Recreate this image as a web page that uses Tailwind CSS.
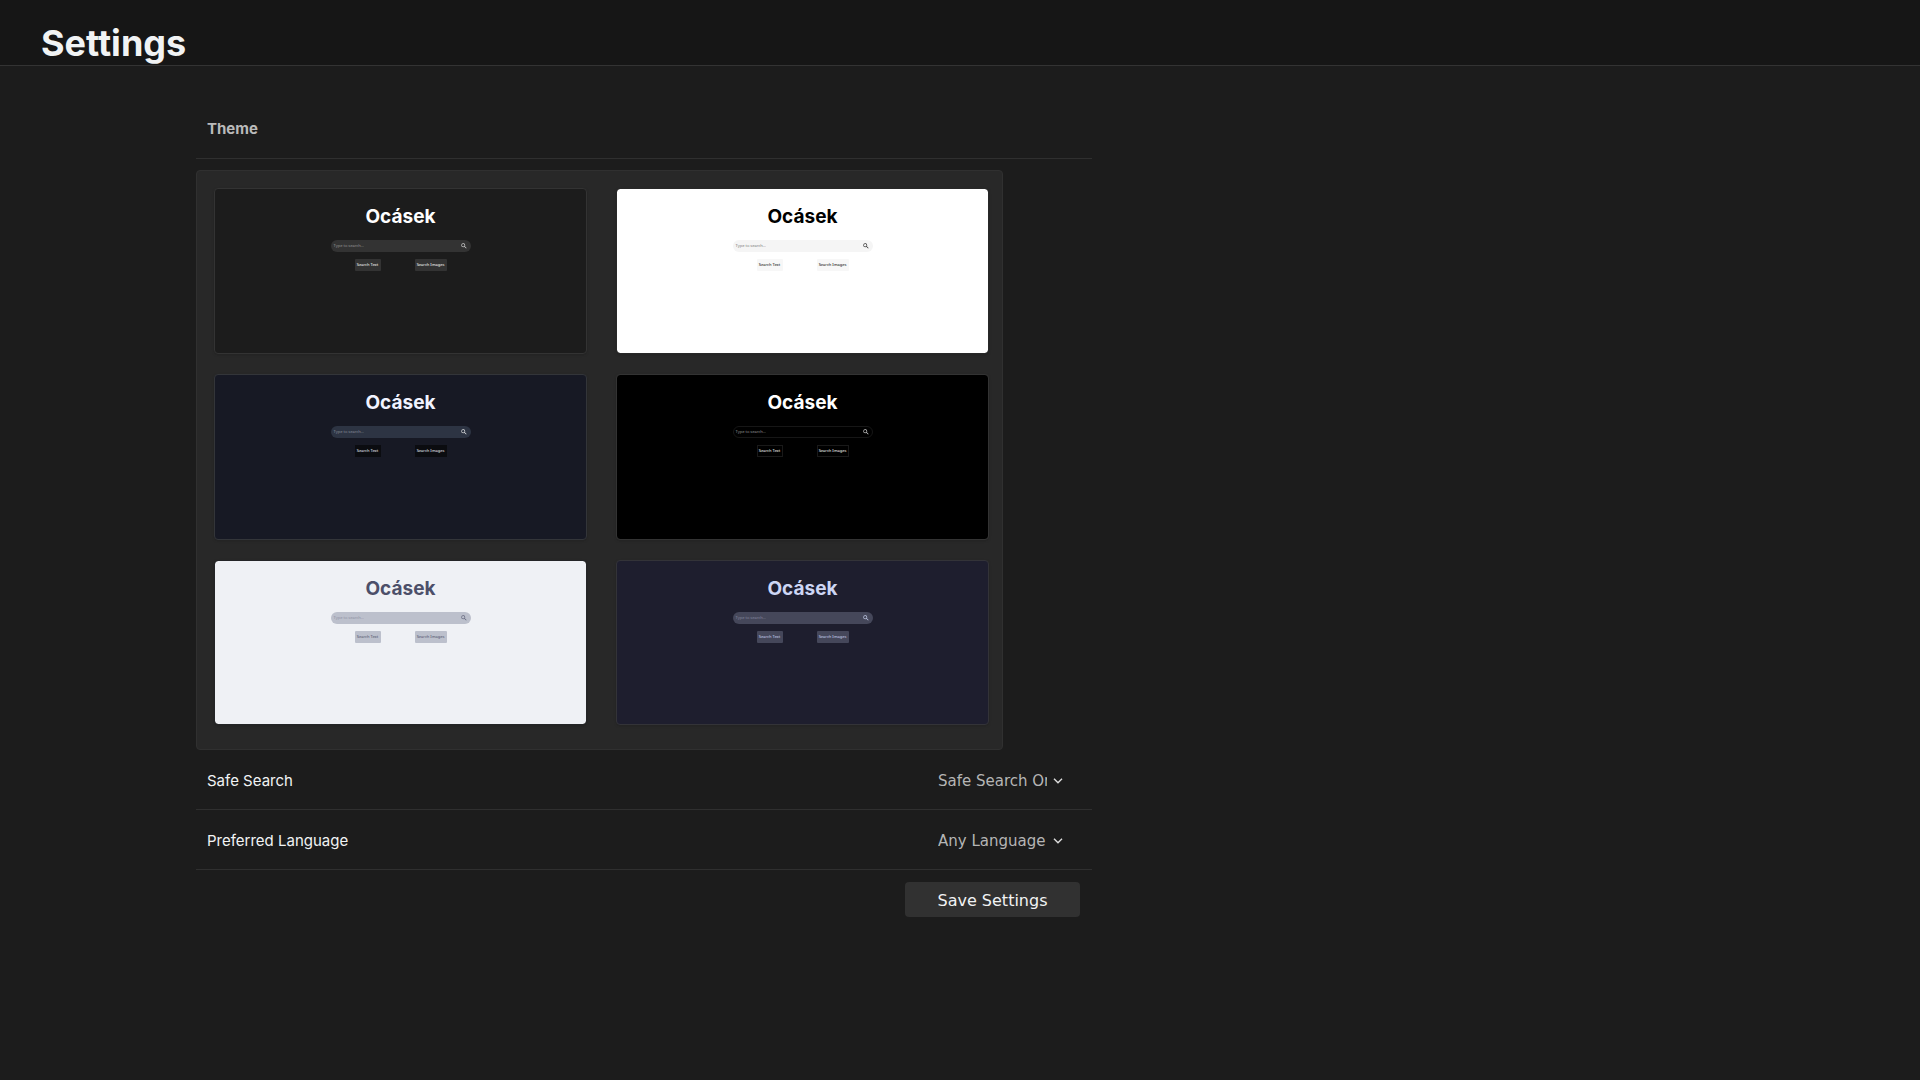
<!DOCTYPE html>
<html lang="en">
<head>
<meta charset="utf-8">
<meta name="viewport" content="width=device-width, initial-scale=1">
<title>Settings</title>
<script src="https://cdn.jsdelivr.net/npm/@tailwindcss/browser@4"></script>
</head>
<body class="min-h-screen bg-[#1c1c1c] font-['Inter',sans-serif] text-[#f1f3f4]">
<svg class="hidden" aria-hidden="true">
  <symbol id="magnifier" viewBox="2 2 20 20"><path fill="currentColor" d="M15.5 14h-.79l-.28-.27A6.47 6.47 0 0 0 16 9.5 6.5 6.5 0 1 0 9.500 16c1.610 0 3.090-.59 4.230-1.570l.27.28v.79l5 4.990L20.490 19l-4.990-5zm-6 0C7.010 14 5 11.990 5 9.500S7.010 5 9.500 5 14 7.010 14 9.500 11.990 14 9.500 14z"/></symbol>
  <symbol id="chevron" viewBox="0 0 10 6"><path fill="none" stroke="currentColor" stroke-width="1.4" d="M1 .8 5 4.800 9 .8"/></symbol>
</svg>
<header class="flex h-[66px] items-start border-b border-[#333] bg-[#161616] px-[41px] pt-[21px]">
  <h1 class="text-[36px] leading-[44px] font-bold">Settings</h1>
</header>

<main class="px-4 pt-8 lg:pl-[196px]">
  <form class="max-w-[896px]">
    <h2 class="mb-[11px] flex h-[61px] items-center border-b border-[#2f2f2f] px-[11px] pt-0.5 text-[15px] font-bold text-[#bababa]">Theme</h2>

    <section class="grid max-w-[807px] grid-cols-2 gap-x-[29px] gap-y-5 rounded border border-[#303030] bg-[#282828] pt-[17px] pr-[13px] pb-6 pl-[17px]" aria-label="Theme">
      <button type="button" class="flex aspect-[9/4] flex-col items-center rounded border border-[#333] bg-[#1c1c1c] pt-4 text-white shadow-sm">
        <span class="text-[19px] leading-6 font-bold">Ocásek</span>
        <span class="mt-[11px] flex h-3 w-[140px] items-center justify-between rounded-full bg-[#333] pr-1 pl-[3px] font-['Noto_Sans',sans-serif] text-[4px] text-[#999]">Type to search...<svg class="size-[6px] text-[#ddd]"><use href="#magnifier"/></svg></span>
        <span class="mt-[7px] flex gap-[34px] font-['Noto_Sans',sans-serif] text-[4px] leading-3"><span class="w-[26px] rounded-[1px] bg-[#333]">Search Text</span><span class="w-8 rounded-[1px] bg-[#333]">Search Images</span></span>
      </button>
      <button type="button" class="flex aspect-[9/4] flex-col items-center rounded border border-[#282828] bg-white bg-clip-padding pt-4 text-black shadow-sm">
        <span class="text-[19px] leading-6 font-bold">Ocásek</span>
        <span class="mt-[11px] flex h-3 w-[140px] items-center justify-between rounded-full bg-[#f5f5f5] pr-1 pl-[3px] font-['Noto_Sans',sans-serif] text-[4px] text-[#777]">Type to search...<svg class="size-[6px] text-[#222]"><use href="#magnifier"/></svg></span>
        <span class="mt-[7px] flex gap-[34px] font-['Noto_Sans',sans-serif] text-[4px] leading-3"><span class="w-[26px] rounded-[1px] bg-[#f7f7f7]">Search Text</span><span class="w-8 rounded-[1px] bg-[#f7f7f7]">Search Images</span></span>
      </button>
      <button type="button" class="flex aspect-[9/4] flex-col items-center rounded border border-[#333539] bg-[#171924] pt-4 text-[#f1f3ff] shadow-sm">
        <span class="text-[19px] leading-6 font-bold">Ocásek</span>
        <span class="mt-[11px] flex h-3 w-[140px] items-center justify-between rounded-full bg-[#2d3443] pr-1 pl-[3px] font-['Noto_Sans',sans-serif] text-[4px] text-[#8b909c]">Type to search...<svg class="size-[6px] text-[#eee]"><use href="#magnifier"/></svg></span>
        <span class="mt-[7px] flex gap-[34px] font-['Noto_Sans',sans-serif] text-[4px] leading-3"><span class="w-[26px] bg-[#0b0c10]">Search Text</span><span class="w-8 bg-[#0b0c10]">Search Images</span></span>
      </button>
      <button type="button" class="flex aspect-[9/4] flex-col items-center rounded border border-[#333] bg-black bg-clip-padding pt-4 text-white shadow-sm">
        <span class="text-[19px] leading-6 font-bold">Ocásek</span>
        <span class="mt-[11px] flex h-3 w-[140px] items-center justify-between rounded-full border border-[#161616] pr-[3px] pl-[2px] font-['Noto_Sans',sans-serif] text-[4px] text-[#999]">Type to search...<svg class="size-[6px] text-[#ddd]"><use href="#magnifier"/></svg></span>
        <span class="mt-[7px] flex gap-[34px] font-['Noto_Sans',sans-serif] text-[4px] leading-[10px]"><span class="w-[26px] border border-[#191919]">Search Text</span><span class="w-8 border border-[#191919]">Search Images</span></span>
      </button>
      <button type="button" class="flex aspect-[9/4] flex-col items-center rounded border border-[#242527] bg-[#eff1f5] bg-clip-padding pt-4 text-[#4c4f69] shadow-sm">
        <span class="text-[19px] leading-6 font-bold">Ocásek</span>
        <span class="mt-[11px] flex h-3 w-[140px] items-center justify-between rounded-full bg-[#bcc0cc] pr-1 pl-[3px] font-['Noto_Sans',sans-serif] text-[4px] text-[#8c8fa1]">Type to search...<svg class="size-[6px] text-[#5c5f77]"><use href="#magnifier"/></svg></span>
        <span class="mt-[7px] flex gap-[34px] font-['Noto_Sans',sans-serif] text-[4px] leading-3"><span class="w-[26px] rounded-[1px] bg-[#bcc0cc]">Search Text</span><span class="w-8 rounded-[1px] bg-[#bcc0cc]">Search Images</span></span>
      </button>
      <button type="button" class="flex aspect-[9/4] flex-col items-center rounded border border-[#333338] bg-[#1e1e2e] pt-4 text-[#cdd6f4] shadow-sm">
        <span class="text-[19px] leading-6 font-bold">Ocásek</span>
        <span class="mt-[11px] flex h-3 w-[140px] items-center justify-between rounded-full bg-[#45475a] pr-1 pl-[3px] font-['Noto_Sans',sans-serif] text-[4px] text-[#8588a0]">Type to search...<svg class="size-[6px] text-[#cdd6f4]"><use href="#magnifier"/></svg></span>
        <span class="mt-[7px] flex gap-[34px] font-['Noto_Sans',sans-serif] text-[4px] leading-3"><span class="w-[26px] rounded-[1px] bg-[#45475a]">Search Text</span><span class="w-8 rounded-[1px] bg-[#45475a]">Search Images</span></span>
      </button>
    </section>

    <div class="flex h-[60px] items-center justify-between border-b border-[#2f2f2f] px-[11px] pt-0.5">
      <label for="safe" class="text-[15px]">Safe Search</label>
      <span class="relative mr-[18px] flex items-center">
        <select id="safe" class="w-[125px] appearance-none truncate bg-transparent pr-4 font-['DejaVu_Sans',sans-serif] text-[15px] text-clip text-[#b5b5b5]"><option>Safe Search On</option><option>Safe Search Off</option></select>
        <svg class="pointer-events-none absolute right-0 h-[6px] w-[10px] text-[#ddd]"><use href="#chevron"/></svg>
      </span>
    </div>
    <div class="flex h-[60px] items-center justify-between border-b border-[#2f2f2f] px-[11px] pt-0.5">
      <label for="lang" class="text-[15px]">Preferred Language</label>
      <span class="relative mr-[18px] flex items-center">
        <select id="lang" class="w-[125px] appearance-none truncate bg-transparent pr-4 font-['DejaVu_Sans',sans-serif] text-[15px] text-clip text-[#b5b5b5]"><option>Any Language</option><option>English</option></select>
        <svg class="pointer-events-none absolute right-0 h-[6px] w-[10px] text-[#ddd]"><use href="#chevron"/></svg>
      </span>
    </div>
    <div class="flex justify-end pt-3 pr-3">
      <button type="submit" class="h-[35px] w-[175px] rounded bg-[#313131] pt-0.5 font-['DejaVu_Sans',sans-serif] text-base">Save Settings</button>
    </div>
  </form>
</main>
</body>
</html>
